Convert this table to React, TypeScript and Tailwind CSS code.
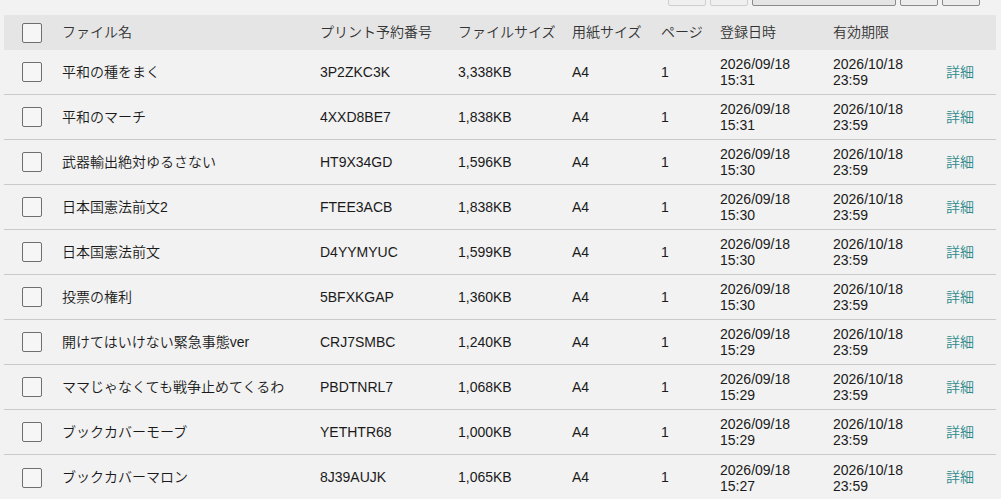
const rows = [
  { name: "平和の種をまく", code: "3P2ZKC3K", size: "3,338KB", reg: "15:31" },
  { name: "平和のマーチ", code: "4XXD8BE7", size: "1,838KB", reg: "15:31" },
  { name: "武器輸出絶対ゆるさない", code: "HT9X34GD", size: "1,596KB", reg: "15:30" },
  { name: "日本国憲法前文2", code: "FTEE3ACB", size: "1,838KB", reg: "15:30" },
  { name: "日本国憲法前文", code: "D4YYMYUC", size: "1,599KB", reg: "15:30" },
  { name: "投票の権利", code: "5BFXKGAP", size: "1,360KB", reg: "15:30" },
  { name: "開けてはいけない緊急事態ver", code: "CRJ7SMBC", size: "1,240KB", reg: "15:29" },
  { name: "ママじゃなくても戦争止めてくるわ", code: "PBDTNRL7", size: "1,068KB", reg: "15:29" },
  { name: "ブックカバーモーブ", code: "YETHTR68", size: "1,000KB", reg: "15:29" },
  { name: "ブックカバーマロン", code: "8J39AUJK", size: "1,065KB", reg: "15:27" },
];

const cols =
  "grid grid-cols-[58px_258px_138px_114px_89px_59px_113px_113px_50px] items-center";

function Box() {
  return (
    <div className="ml-[18px] h-5 w-5 rounded-[2px] border-[1.5px] border-[#6f6f6f] bg-[#f6f6f6]" />
  );
}

export default function App() {
  return (
    <div
      className="h-[499px] w-[1001px] overflow-hidden bg-[#f2f2f2] text-[14px] font-[350] text-[#1a1a1a]"
      style={{ fontFamily: '"Liberation Sans", "Noto Sans CJK JP", sans-serif' }}
    >
      {/* pager buttons, mostly scrolled off */}
      <div className="-mt-[24px] flex justify-end gap-[4px] pr-[21px]">
        <div className="h-[30px] w-[38px] rounded-[2px] border border-[#cfcfcf] bg-[#f0f0f0]" />
        <div className="h-[30px] w-[38px] rounded-[2px] border border-[#cfcfcf] bg-[#f0f0f0]" />
        <div className="h-[30px] w-[144px] rounded-[2px] border border-[#8a8a8a] bg-[#e4e4e4]" />
        <div className="h-[30px] w-[38px] rounded-[2px] border border-[#8a8a8a] bg-[#ececec]" />
        <div className="h-[30px] w-[38px] rounded-[2px] border border-[#8a8a8a] bg-[#ececec]" />
      </div>

      <div className="mx-[4px] mt-[9px] w-[992px]">
        <div className={`${cols} h-[35px] bg-[#e5e5e5] text-[#333]`}>
          <Box />
          <span>ファイル名</span>
          <span>プリント予約番号</span>
          <span>ファイルサイズ</span>
          <span>用紙サイズ</span>
          <span>ページ</span>
          <span>登録日時</span>
          <span>有効期限</span>
          <span />
        </div>

        {rows.map((r) => (
          <div key={r.code} className={`${cols} h-[45px] border-b border-[#cacaca] last:border-b-0`}>
            <Box />
            <span>{r.name}</span>
            <span>{r.code}</span>
            <span>{r.size}</span>
            <span>A4</span>
            <span>1</span>
            <span className="leading-[16px]">
              2026/09/18
              <br />
              {r.reg}
            </span>
            <span className="leading-[16px]">
              2026/10/18
              <br />
              23:59
            </span>
            <a className="text-[#2f8a8c]">詳細</a>
          </div>
        ))}
      </div>
    </div>
  );
}
